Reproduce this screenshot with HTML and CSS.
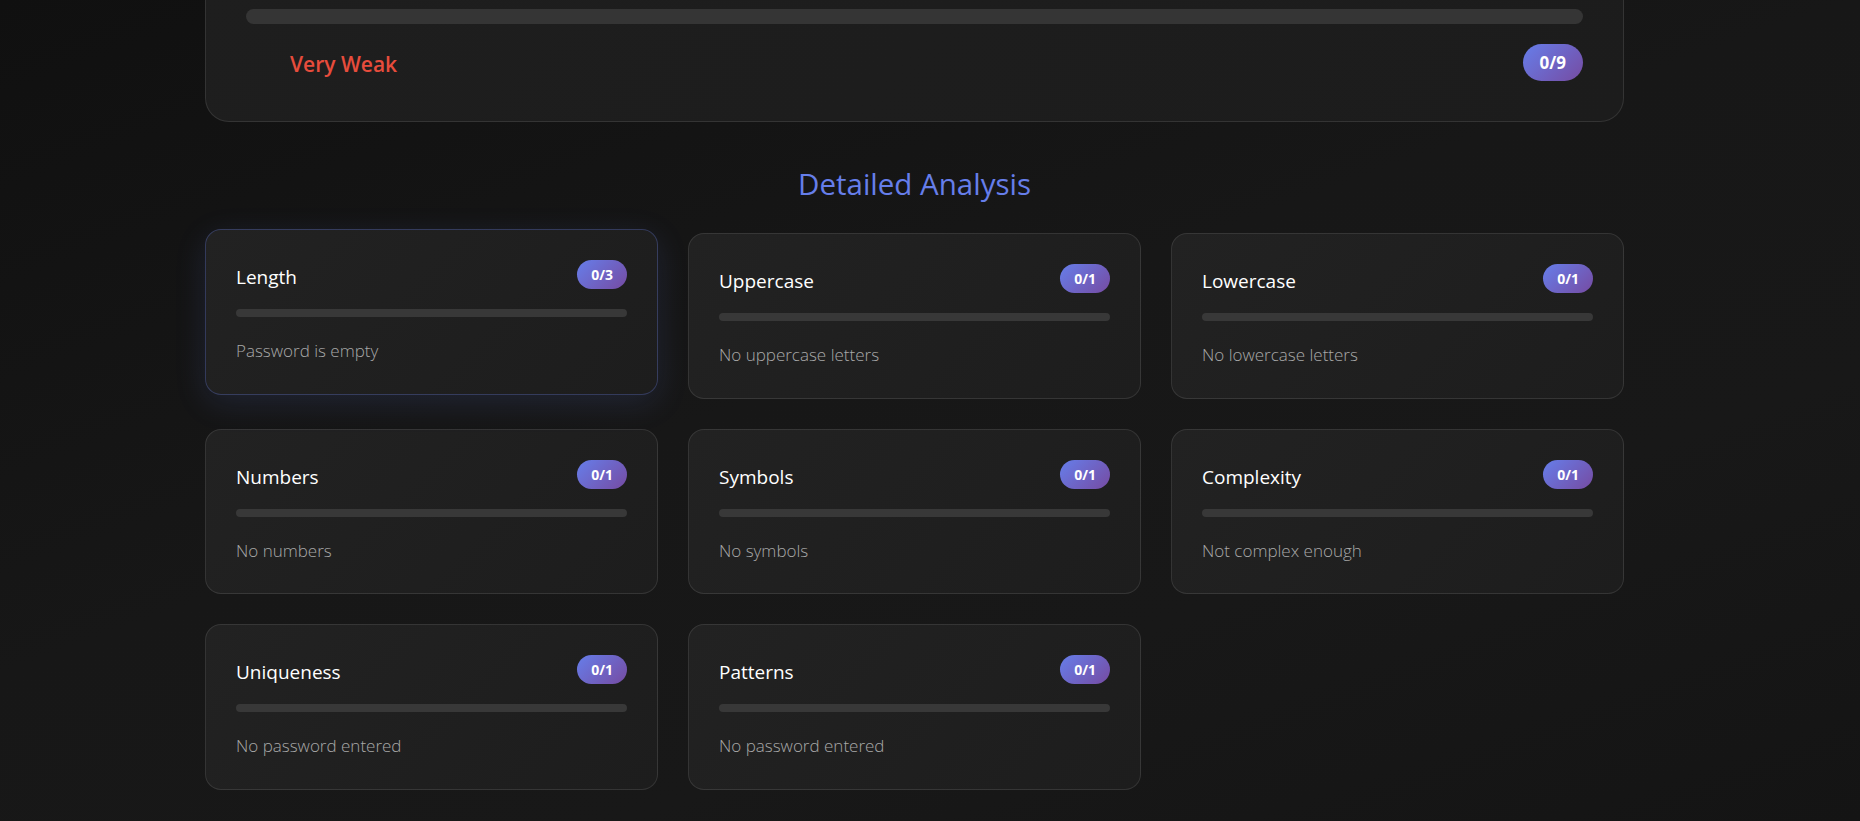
FILE: index.html
```html
<!DOCTYPE html>
<html lang="en">
<head>
<meta charset="utf-8">
<title>Password Strength</title>
<link rel="stylesheet" href="styles.css">
</head>
<body>
<main class="page">
  <section class="strength-card">
    <div class="strength-track"><div class="strength-fill" style="width:0%"></div></div>
    <div class="strength-row">
      <span class="strength-label">Very Weak</span>
      <span class="score-badge">0/9</span>
    </div>
  </section>

  <h2 class="section-title">Detailed Analysis</h2>

  <div class="analysis-grid">
    <div class="metric-card is-hover">
      <div class="metric-head"><span class="metric-name">Length</span><span class="metric-badge">0/3</span></div>
      <div class="metric-track"><div class="metric-fill" style="width:0%"></div></div>
      <p class="metric-desc">Password is empty</p>
    </div>
    <div class="metric-card">
      <div class="metric-head"><span class="metric-name">Uppercase</span><span class="metric-badge">0/1</span></div>
      <div class="metric-track"><div class="metric-fill" style="width:0%"></div></div>
      <p class="metric-desc">No uppercase letters</p>
    </div>
    <div class="metric-card">
      <div class="metric-head"><span class="metric-name">Lowercase</span><span class="metric-badge">0/1</span></div>
      <div class="metric-track"><div class="metric-fill" style="width:0%"></div></div>
      <p class="metric-desc">No lowercase letters</p>
    </div>
    <div class="metric-card">
      <div class="metric-head"><span class="metric-name">Numbers</span><span class="metric-badge">0/1</span></div>
      <div class="metric-track"><div class="metric-fill" style="width:0%"></div></div>
      <p class="metric-desc">No numbers</p>
    </div>
    <div class="metric-card">
      <div class="metric-head"><span class="metric-name">Symbols</span><span class="metric-badge">0/1</span></div>
      <div class="metric-track"><div class="metric-fill" style="width:0%"></div></div>
      <p class="metric-desc">No symbols</p>
    </div>
    <div class="metric-card">
      <div class="metric-head"><span class="metric-name">Complexity</span><span class="metric-badge">0/1</span></div>
      <div class="metric-track"><div class="metric-fill" style="width:0%"></div></div>
      <p class="metric-desc">Not complex enough</p>
    </div>
    <div class="metric-card">
      <div class="metric-head"><span class="metric-name">Uniqueness</span><span class="metric-badge">0/1</span></div>
      <div class="metric-track"><div class="metric-fill" style="width:0%"></div></div>
      <p class="metric-desc">No password entered</p>
    </div>
    <div class="metric-card">
      <div class="metric-head"><span class="metric-name">Patterns</span><span class="metric-badge">0/1</span></div>
      <div class="metric-track"><div class="metric-fill" style="width:0%"></div></div>
      <p class="metric-desc">No password entered</p>
    </div>
  </div>
</main>
</body>
</html>
```

FILE: styles.css
```css
* { box-sizing: border-box; }

html, body {
  margin: 0;
  padding: 0;
  height: 100%;
  overflow: hidden;
}

body {
  background: linear-gradient(160deg, #101010 0%, #171717 45%, #181818 70%, #141414 100%);
  font-family: "Open Sans", "Noto Sans", sans-serif;
  color: #fff;
}

.page {
  width: 1419px;
  margin: -32px 0 0 205px;
}

.strength-card {
  background: linear-gradient(135deg, #1e1e1e 0%, #1c1c1c 100%);
  border: 1px solid rgba(255, 255, 255, 0.1);
  border-radius: 24px;
  padding: 40px 40px 40px;
}

.strength-track {
  height: 15px;
  border-radius: 8px;
  background: #353535;
  overflow: hidden;
}

.strength-fill {
  height: 100%;
  background: #e74c3c;
}

.strength-row {
  margin-top: 20px;
  display: flex;
  align-items: center;
  justify-content: space-between;
}

.strength-label {
  padding-left: 44px;
  padding-top: 2px;
  font-size: 21px;
  font-weight: 600;
  color: #e74c3c;
}

.score-badge {
  display: inline-flex;
  align-items: center;
  justify-content: center;
  height: 37px;
  padding: 0 17px;
  border-radius: 19px;
  background: linear-gradient(135deg, #667eea 0%, #764ba2 100%);
  font-size: 17px;
  font-weight: 700;
  color: #fff;
}

.section-title {
  margin: 45px 0 32px;
  text-align: center;
  font-size: 29.5px;
  line-height: 34px;
  font-weight: 500;
  color: #667eea;
}

.analysis-grid {
  display: grid;
  grid-template-columns: repeat(3, 1fr);
  gap: 30px;
}

.metric-card {
  height: 165.5px;
  background: linear-gradient(135deg, #222222 0%, #1d1d1d 100%);
  border: 1px solid rgba(255, 255, 255, 0.1);
  border-radius: 16px;
  padding: 30px 30px;
}

.metric-card.is-hover {
  transform: translateY(-4px);
  border-color: rgba(102, 126, 234, 0.3);
  box-shadow: 0 8px 32px rgba(102, 126, 234, 0.14);
}

.metric-head {
  display: flex;
  align-items: center;
  justify-content: space-between;
  height: 29px;
}

.metric-name {
  padding-top: 5px;
  font-size: 19px;
  font-weight: 500;
  color: #fff;
}

.metric-badge {
  display: inline-flex;
  align-items: center;
  justify-content: center;
  height: 29px;
  padding: 0 14px;
  border-radius: 15px;
  background: linear-gradient(135deg, #667eea 0%, #764ba2 100%);
  font-size: 14px;
  font-weight: 700;
  color: #fff;
}

.metric-track {
  margin-top: 20px;
  height: 8px;
  border-radius: 4px;
  background: #383838;
  overflow: hidden;
}

.metric-fill {
  height: 100%;
  background: #667eea;
}

.metric-desc {
  margin: 22px 0 0;
  font-size: 17px;
  line-height: 24px;
  font-weight: 300;
  color: #a8a8a8;
}
```
